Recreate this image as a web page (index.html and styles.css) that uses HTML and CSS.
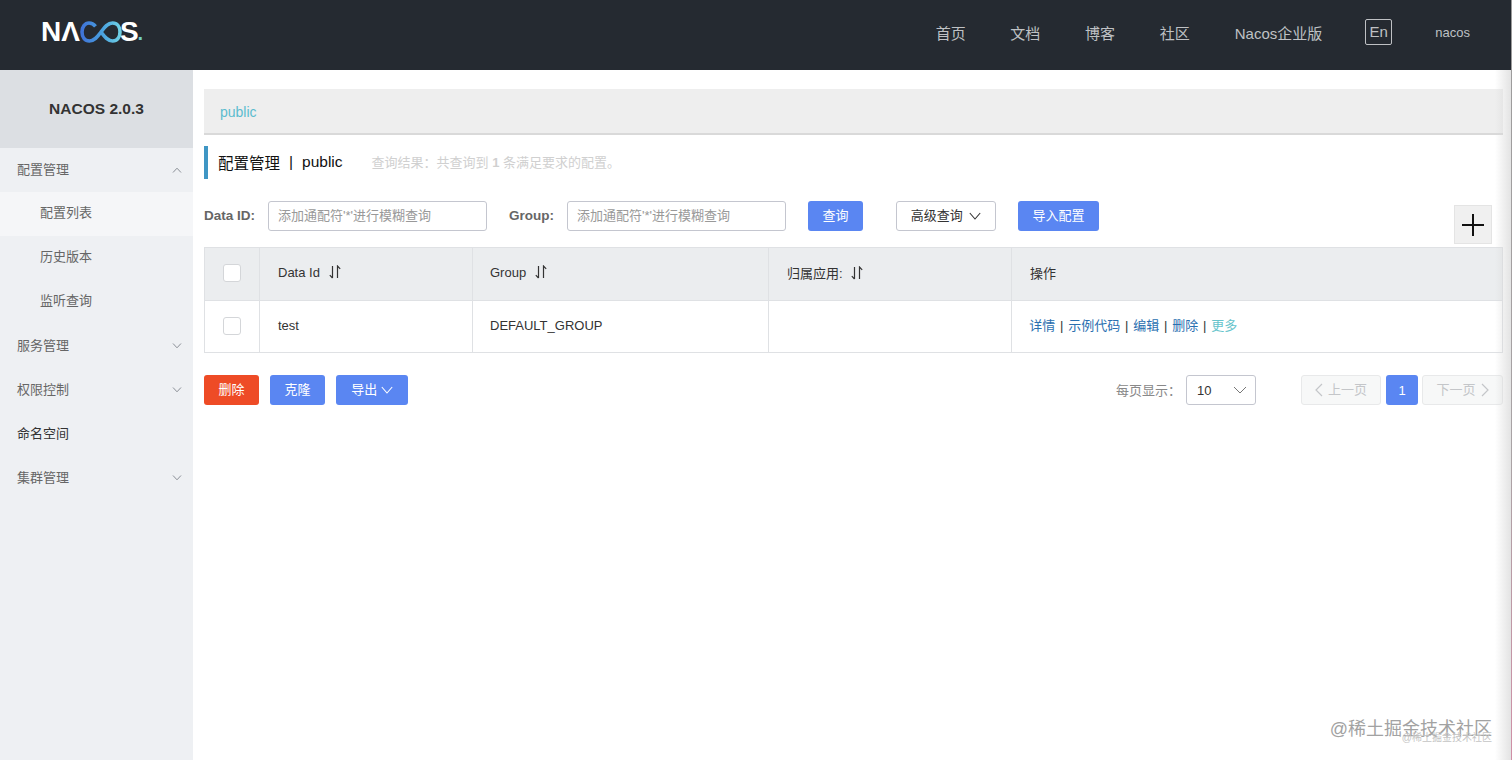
FILE: index.html
```html
<!DOCTYPE html>
<html lang="en">
<head>
  <meta charset="UTF-8">
  <meta name="viewport" content="width=device-width, initial-scale=1.0">
  <title>Nacos</title>
  <link rel="stylesheet" href="styles.css">
</head>

<body>
  <header class="topbar">
    <div class="logo">
      <span>N&Lambda;</span>
      <svg class="logo-loop" width="42" height="22" viewBox="0 0 42 22">
        <defs>
          <linearGradient id="loopGrad" x1="0" x2="1" y1="0" y2="0">
            <stop offset="0" stop-color="#3f74d8"/>
            <stop offset="0.55" stop-color="#4aa3e0"/>
            <stop offset="1" stop-color="#6fd0e4"/>
          </linearGradient>
        </defs>
        <path d="M15.500 5.400C13.800 3.200 11.500 2 9 2 4.800 2 2 6 2 11s2.800 9 7.400 9c5.400 0 8.600-5 11.600-9 3-4 6.200-9 11.600-9C37.200 2 40 6 40 11s-2.800 9-7.400 9c-5.400 0-8.600-5-11.600-9" fill="none" stroke="url(#loopGrad)" stroke-width="3.600"/>
      </svg>
      <span class="logo-s">S</span><span class="logo-dot">.</span>
    </div>
    <nav class="topnav">
      <a class="nav-home">首页</a>
      <a class="nav-docs">文档</a>
      <a class="nav-blog">博客</a>
      <a class="nav-community">社区</a>
      <a class="nav-ent">Nacos企业版</a>
      <a class="lang-btn">En</a>
      <a class="user">nacos</a>
    </nav>
  </header>

  <div class="layout">
    <aside class="sidebar">
      <div class="version">NACOS 2.0.3</div>
      <ul class="menu">
        <li class="menu-item open">配置管理
          <svg class="arrow" width="10" height="6" viewBox="0 0 10 6"><path d="M1 5.500L5 1.200 9 5.500" fill="none" stroke="#8a8f96"/></svg>
        </li>
        <li class="menu-sub active">配置列表</li>
        <li class="menu-sub">历史版本</li>
        <li class="menu-sub">监听查询</li>
        <li class="menu-item">服务管理
          <svg class="arrow" width="10" height="6" viewBox="0 0 10 6"><path d="M1 .5L5 4.800 9 .5" fill="none" stroke="#8a8f96"/></svg>
        </li>
        <li class="menu-item">权限控制
          <svg class="arrow" width="10" height="6" viewBox="0 0 10 6"><path d="M1 .5L5 4.800 9 .5" fill="none" stroke="#8a8f96"/></svg>
        </li>
        <li class="menu-item dark">命名空间</li>
        <li class="menu-item">集群管理
          <svg class="arrow" width="10" height="6" viewBox="0 0 10 6"><path d="M1 .5L5 4.800 9 .5" fill="none" stroke="#8a8f96"/></svg>
        </li>
      </ul>
    </aside>

    <main class="main-content">
      <div class="namespace-bar">public</div>

      <div class="page-title">
        <span class="title-main">配置管理</span>
        <span class="title-sep">|</span>
        <span class="title-ns">public</span>
        <span class="title-result">查询结果：共查询到 <b>1</b> 条满足要求的配置。</span>
      </div>

      <div class="search-row">
        <label class="search-label label-id">Data ID:</label>
        <input class="form-input input-id" type="text" placeholder="添加通配符'*'进行模糊查询">
        <label class="search-label label-group">Group:</label>
        <input class="form-input input-group" type="text" placeholder="添加通配符'*'进行模糊查询">
        <button class="btn btn-primary btn-query">查询</button>
        <button class="btn btn-normal btn-advanced">高级查询
          <svg width="12" height="8" viewBox="0 0 12 8"><path d="M.8 1L6 7l5.200-6" fill="none" stroke="#333" stroke-width="1.100"/></svg>
        </button>
        <button class="btn btn-primary btn-import">导入配置</button>
        <button class="btn-plus">
          <svg width="24" height="24" viewBox="0 0 24 24"><path d="M1 12h22M12 1v22" stroke="#111" stroke-width="2"/></svg>
        </button>
      </div>

      <table class="config-table">
        <colgroup>
          <col class="col-check"><col class="col-id"><col class="col-group"><col class="col-app"><col>
        </colgroup>
        <thead>
          <tr>
            <th class="cell-check"><span class="checkbox"></span></th>
            <th>Data Id
              <svg class="sort" width="12" height="14" viewBox="0 0 12 14"><path d="M3.500 1v12M.8 10.200l2.700 2.800M8.500 13V1l2.700 2.800" fill="none" stroke="#333" stroke-width="1.200"/></svg>
            </th>
            <th class="cell-group">Group
              <svg class="sort" width="12" height="14" viewBox="0 0 12 14"><path d="M3.500 1v12M.8 10.200l2.700 2.800M8.500 13V1l2.700 2.800" fill="none" stroke="#333" stroke-width="1.200"/></svg>
            </th>
            <th>归属应用:
              <svg class="sort" width="12" height="14" viewBox="0 0 12 14"><path d="M3.500 1v12M.8 10.200l2.700 2.800M8.500 13V1l2.700 2.800" fill="none" stroke="#333" stroke-width="1.200"/></svg>
            </th>
            <th>操作</th>
          </tr>
        </thead>
        <tbody>
          <tr>
            <td class="cell-check"><span class="checkbox"></span></td>
            <td>test</td>
            <td class="cell-group">DEFAULT_GROUP</td>
            <td></td>
            <td class="actions">
              <a>详情</a> | <a>示例代码</a> | <a>编辑</a> | <a>删除</a> | <a class="more">更多</a>
            </td>
          </tr>
        </tbody>
      </table>

      <div class="table-footer">
        <button class="btn btn-danger btn-small">删除</button>
        <button class="btn btn-primary btn-small">克隆</button>
        <button class="btn btn-primary btn-export">导出
          <svg width="12" height="8" viewBox="0 0 12 8"><path d="M.8 1L6 7l5.200-6" fill="none" stroke="#fff" stroke-width="1.100"/></svg>
        </button>
        <div class="pager">
          <span class="page-label">每页显示：</span>
          <div class="page-size">10
            <svg width="14" height="8" viewBox="0 0 14 8"><path d="M1 1l6 6 6-6" fill="none" stroke="#777"/></svg>
          </div>
          <button class="page-btn page-prev">
            <svg width="8" height="14" viewBox="0 0 8 14"><path d="M7 1L1 7l6 6" fill="none" stroke="#c4c6c9" stroke-width="1.200"/></svg>
            上一页
          </button>
          <button class="page-current">1</button>
          <button class="page-btn page-next">下一页
            <svg width="8" height="14" viewBox="0 0 8 14"><path d="M1 1l6 6-6 6" fill="none" stroke="#c4c6c9" stroke-width="1.200"/></svg>
          </button>
        </div>
      </div>
    </main>
  </div>

  <div class="edge-shade"></div>
  <div class="edge-line"></div>
  <div class="watermark">@稀土掘金技术社区</div>
  <div class="watermark-small">@稀土掘金技术社区</div>
</body>
</html>
```

FILE: styles.css
```css
* {
  box-sizing: border-box;
}

html, body {
  height: 100%;
}

body {
  font-family: "Liberation Sans", "Noto Sans CJK SC", sans-serif;
  margin: 0;
  padding: 0;
  background-color: #fff;
  color: #333;
  font-size: 13px;
  overflow: hidden;
}

/* top bar */
.topbar {
  height: 70px;
  background-color: #252a31;
  display: flex;
  align-items: center;
  justify-content: space-between;
  padding: 0 41px;
}

.logo {
  display: flex;
  align-items: center;
  color: #fff;
  font-family: "Liberation Sans", sans-serif;
  font-size: 28px;
  font-weight: bold;
  line-height: 1;
  margin-top: -6px;
}

.logo-loop {
  margin: 0 -2px 0 0;
}

.logo-s {
  letter-spacing: -1px;
}

.logo-dot {
  color: #6fd0c8;
  font-size: 20px;
  align-self: flex-end;
  margin-bottom: 3px;
}

.topnav {
  display: flex;
  align-items: center;
  color: #bfc1c4;
  font-size: 15px;
  margin-right: 1px;
  margin-top: -6px;
}

.topnav a {
  margin-right: 44.700px;
}

.topnav .nav-ent {
  margin-right: 43px;
}

.topnav .nav-community {
  margin-right: 45px;
}

.lang-btn {
  border: 1px solid #bfc1c4;
  border-radius: 2px;
  width: 27px;
  height: 26px;
  line-height: 24px;
  text-align: center;
  font-size: 15px;
}

.topnav .lang-btn {
  margin-right: 43px;
}

.topnav .user {
  margin-right: 0;
  font-size: 13px;
}

/* sidebar */
.layout {
  display: flex;
  height: 690px;
}

.sidebar {
  width: 193px;
  flex-shrink: 0;
  background-color: #eef0f3;
}

.version {
  height: 78px;
  background-color: #dcdfe3;
  color: #333;
  font-size: 15.500px;
  font-weight: bold;
  text-align: center;
  line-height: 77px;
}

.menu {
  list-style: none;
  margin: 0;
  padding: 0;
}

.menu-item, .menu-sub {
  height: 44px;
  color: #666;
}

.menu-item {
  padding: 0 11px 3px 17px;
  display: flex;
  align-items: center;
  justify-content: space-between;
}

.menu-item .arrow {
  margin-top: 3px;
}

.menu-item.dark {
  color: #333;
}

.menu-sub {
  padding-left: 40px;
  line-height: 42px;
}

.menu-sub.active {
  background-color: #f5f6f8;
}

/* main */
.main-content {
  flex: 1;
  padding: 19px 9px 0 11px;
}

.namespace-bar {
  height: 46px;
  background-color: #eeeeee;
  border-bottom: 2px solid #d9d9d9;
  color: #5cbccf;
  font-size: 14px;
  padding-left: 16px;
  line-height: 47px;
}

.page-title {
  height: 33px;
  margin-top: 11px;
  border-left: 4px solid #3f96c4;
  padding: 0 0 2px 10px;
  display: flex;
  align-items: center;
  color: #111;
  font-size: 15.500px;
}

.title-sep {
  margin: 0 9px;
}

.title-result {
  margin-left: 29px;
  color: #d0d0d0;
  font-size: 13px;
}

.search-row {
  display: flex;
  align-items: flex-start;
  height: 30px;
  margin-top: 22px;
}

.search-label {
  font-weight: bold;
  color: #666;
  font-size: 13.500px;
  line-height: 29px;
}

.form-input {
  height: 30px;
  border: 1px solid #c4c6cf;
  border-radius: 3px;
  padding: 0 10px 2px 9px;
  font-family: inherit;
  font-size: 13px;
  color: #333;
}

.form-input::placeholder {
  color: #999;
}

.input-id {
  width: 219px;
  margin-left: 13px;
}

.label-group {
  margin-left: 22px;
}

.input-group {
  width: 219px;
  margin-left: 13px;
}

.btn {
  height: 30px;
  border: 1px solid transparent;
  border-radius: 3px;
  font-family: inherit;
  font-size: 13px;
  padding: 0 0 3px;
  cursor: pointer;
}

.btn svg {
  vertical-align: 0;
}

.btn-primary {
  background-color: #5a86f2;
  color: #fff;
}

.btn-danger {
  background-color: #ee4b26;
  color: #fff;
}

.btn-normal {
  background-color: #fff;
  border-color: #c4c6cf;
  color: #333;
}

.btn-query {
  width: 55px;
  margin-left: 22px;
}

.btn-advanced {
  width: 100px;
  margin-left: 33px;
}

.btn-advanced svg {
  margin-left: 3px;
}

.btn-import {
  width: 81px;
  margin-left: 22px;
}

.btn-plus {
  width: 38px;
  height: 39px;
  margin: 4px 11px -13px auto;
  padding: 0;
  background-color: #f0f0f0;
  border: 1px solid #e4e4e4;
  display: flex;
  align-items: center;
  justify-content: center;
}

/* table */
.config-table {
  width: 100%;
  table-layout: fixed;
  border-collapse: collapse;
  margin-top: 16px;
}

.col-check {
  width: 55px;
}

.col-id {
  width: 213px;
}

.col-group {
  width: 296px;
}

.col-app {
  width: 243px;
}

.config-table, .config-table th, .config-table td {
  border: 1px solid #dfe1e4;
}

.config-table th, .config-table td {
  padding: 0 18px 2px;
  text-align: left;
  font-weight: normal;
  color: #333;
}

.config-table th {
  height: 53px;
  padding-bottom: 4px;
  background-color: #ebedef;
}

.config-table td {
  height: 52px;
}

.config-table .cell-check {
  padding: 0 0 2px;
  text-align: center;
}

.config-table .cell-group {
  padding-left: 17px;
}

.config-table .actions {
  padding-left: 16px;
  padding-bottom: 4px;
}

.checkbox {
  display: inline-block;
  width: 18px;
  height: 18px;
  background-color: #fff;
  border: 1px solid #d4d6d9;
  border-radius: 3px;
  vertical-align: middle;
}

.sort {
  margin-left: 5px;
  vertical-align: -2px;
}

.actions a {
  color: #2a6fb0;
  margin: 0 1.200px;
}

.actions .more {
  color: #67c4cc;
}

/* footer */
.table-footer {
  display: flex;
  align-items: center;
  height: 30px;
  margin-top: 22px;
}

.btn-small {
  width: 55px;
  margin-right: 11px;
}

.btn-export {
  width: 72px;
}

.pager {
  display: flex;
  align-items: center;
  margin-left: auto;
}

.page-label {
  color: #888;
  padding-bottom: 2px;
}

.page-size {
  width: 70px;
  height: 30px;
  margin-left: 5px;
  border: 1px solid #c4c6cf;
  border-radius: 3px;
  padding: 0 8px 0 10px;
  display: flex;
  align-items: center;
  justify-content: space-between;
  color: #333;
}

.page-btn {
  width: 81px;
  height: 30px;
  padding: 0 0 3px;
  background-color: #f7f8f8;
  border: 1px solid #e8e9ea;
  border-radius: 3px;
  color: #c4c6c9;
  font-family: inherit;
  font-size: 13px;
  display: flex;
  align-items: center;
  justify-content: center;
  gap: 5px;
}

.page-btn svg {
  margin-top: 3px;
}

.page-prev {
  margin-left: 45px;
  width: 80px;
}

.page-current {
  width: 32px;
  height: 30px;
  margin: 0 4px 0 5px;
  padding: 0;
  background-color: #5a86f2;
  border: none;
  border-radius: 3px;
  color: #fff;
  font-size: 13px;
  font-family: inherit;
}

/* overlays */
.edge-shade {
  position: absolute;
  top: 70px;
  right: 1px;
  bottom: 0;
  width: 16px;
  background: linear-gradient(to right, rgba(225, 225, 225, 0), rgba(215, 215, 215, 0.7));
  pointer-events: none;
}

.edge-line {
  position: absolute;
  top: 0;
  right: 0;
  bottom: 0;
  width: 1px;
  background: linear-gradient(to bottom, #9a9a9a, #a9a3a5 60%, #d08fa6);
}

.watermark {
  position: absolute;
  right: 20px;
  bottom: 20px;
  font-size: 18px;
  color: #a2a2a2;
}

.watermark-small {
  position: absolute;
  right: 20px;
  bottom: 16px;
  font-size: 10px;
  color: #c4c4c4;
}
```
